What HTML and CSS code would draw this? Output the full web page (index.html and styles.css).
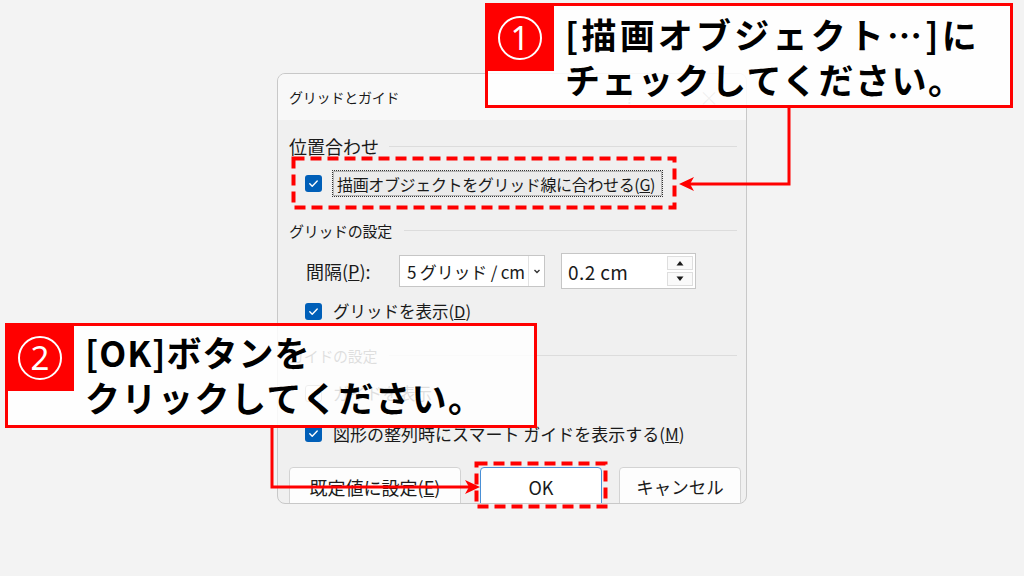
FILE: index.html
```html
<!DOCTYPE html>
<html lang="ja">
<head>
<meta charset="utf-8">
<title>グリッドとガイド</title>
<link rel="stylesheet" href="styles.css">
</head>
<body>
<div class="page">
  <div class="dialog">
    <div class="titlebar">
      <span class="title">グリッドとガイド</span>
      <span class="tbtn help">?</span>
      <span class="tbtn close">×</span>
    </div>
    <div class="body">
      <div class="ghead big">位置合わせ</div>
      <div class="crow first">
        <span class="cb on"><svg viewBox="0 0 16 16"><path d="M4.5 8.3l2.3 2.3 4.7-4.9" /></svg></span>
        <span class="focus">描画オブジェクトをグリッド線に合わせる(<u>G</u>)</span>
      </div>
      <div class="ghead">グリッドの設定</div>
      <div class="srow">
        <span class="slabel">間隔(<u>P</u>):</span>
        <div class="select">
          <span class="sval">5 グリッド / cm</span>
          <span class="chev"><svg viewBox="0 0 10 10"><path d="M2.5 4l2.5 2.5 2.5-2.5" /></svg></span>
        </div>
        <div class="spin">
          <span class="spval">0.2 cm</span>
          <span class="arrows">
            <span class="arr"><svg viewBox="0 0 10 6"><path d="M1.5 5.5h7L5 1z" /></svg></span>
            <span class="arr"><svg viewBox="0 0 10 6"><path d="M1.5 0.5h7L5 5z" /></svg></span>
          </span>
        </div>
      </div>
      <div class="crow r2">
        <span class="cb on"><svg viewBox="0 0 16 16"><path d="M4.5 8.3l2.3 2.3 4.7-4.9" /></svg></span>
        <span class="clabel">グリッドを表示(<u>D</u>)</span>
      </div>
      <div class="ghead">ガイドの設定</div>
      <div class="crow r3">
        <span class="cb off"></span>
        <span class="clabel">ガイドを表示</span>
      </div>
      <div class="crow r4">
        <span class="cb on"><svg viewBox="0 0 16 16"><path d="M4.5 8.3l2.3 2.3 4.7-4.9" /></svg></span>
        <span class="clabel">図形の整列時にスマート ガイドを表示する(<u>M</u>)</span>
      </div>
      <div class="brow">
        <span class="btn wide">既定値に設定(<u>E</u>)</span>
        <span class="btn ok">OK</span>
        <span class="btn cancel">キャンセル</span>
      </div>
    </div>
  </div>

  <svg class="overlay" viewBox="0 0 1024 576" width="1024" height="576">
    <rect x="293.5" y="158.5" width="381" height="49" class="dash" />
    <rect x="476.5" y="463.5" width="129" height="43" class="dash" />
    <polyline points="789,106 789,184 688,184" class="conn" />
    <polygon points="679,184 694,177 690,184 694,191" class="head" />
    <polyline points="272,426 272,487 470,487" class="conn" />
    <polygon points="480,487 465,480 469,487 465,494" class="head" />
  </svg>

  <div class="callout c1">
    <div class="badge"><span class="num">1</span></div>
    <div class="ctext">
      <div class="line l1">[描画オブジェクト…]に</div>
      <div class="line">チェックしてください。</div>
    </div>
  </div>

  <div class="callout c2">
    <div class="badge"><span class="num">2</span></div>
    <div class="ctext">
      <div class="line l3">[OK]ボタンを</div>
      <div class="line">クリックしてください。</div>
    </div>
  </div>
</div>
</body>
</html>
```

FILE: styles.css
```css
* { box-sizing: border-box; }
html, body { margin: 0; padding: 0; }
body {
  background: #f3f3f3;
  font-family: "Noto Sans CJK JP", "Noto Sans", sans-serif;
}
.page {
  position: relative;
  width: 1024px;
  height: 576px;
  overflow: hidden;
  padding: 73px 0 0 277px;
  background: #f3f3f3;
}

/* dialog */
.dialog {
  width: 470px;
  height: 431px;
  border: 1px solid #c8c8c8;
  border-radius: 8px;
  background: #f0f0f0;
  overflow: hidden;
  display: flex;
  flex-direction: column;
  color: #1a1a1a;
}
.titlebar {
  height: 46px;
  flex: none;
  background: #f8f8f8;
  display: flex;
  align-items: center;
  padding-left: 11px;
  font-size: 14px;
}
.title { flex: 1; letter-spacing: -0.2px; }
.tbtn { color: #8a8a8a; font-size: 15px; }
.help { margin-right: 66px; }
.close { font-size: 20px; font-weight: 300; margin-right: 27px; }

.body {
  padding: 0 9px 0 11px;
  display: flex;
  flex-direction: column;
}
.ghead {
  display: flex;
  align-items: center;
  height: 26px;
  margin-top: 20px;
  font-size: 15px;
  letter-spacing: -0.3px;
}
.ghead::after {
  content: "";
  flex: 1;
  height: 1px;
  background: #dcdcdc;
  margin-left: 12px;
}
.ghead.big { font-size: 18px; margin-top: 13px; letter-spacing: 0; }
.ghead.big::after { margin-left: 10px; }

.crow {
  display: flex;
  align-items: center;
  padding-left: 16px;
  height: 22px;
  font-size: 16.5px;
}
.crow.first { height: 27px; margin-top: 11px; }
.crow.r2 { margin-top: 11px; }
.crow.r3 { margin-top: 14px; }
.crow.r4 { margin-top: 18px; font-size: 17px; }
.cb {
  width: 17px;
  height: 17px;
  border-radius: 3px;
  flex: none;
  margin-right: 11px;
  display: flex;
}
.cb.on { background: #005fb8; }
.cb.off { background: #fff; border: 1px solid #8a8a8a; }
.cb svg { width: 17px; height: 17px; }
.cb path { fill: none; stroke: #fff; stroke-width: 1.3; stroke-linecap: round; stroke-linejoin: round; }
.focus {
  margin-left: -1px;
  height: 27px;
  width: 331px;
  display: flex;
  align-items: center;
  padding-left: 4px;
  border: 1px dotted #333;
  box-shadow: inset 0 0 0 1px #b5b5b5;
  background: #ebebeb;
  font-size: 16px;
  letter-spacing: -0.35px;
  white-space: nowrap;
}
.clabel { white-space: nowrap; }

.srow {
  display: flex;
  align-items: center;
  height: 36px;
  margin-top: 10px;
  padding-left: 17px;
}
.slabel { width: 93px; font-size: 18px; }
.select {
  width: 146px;
  height: 32px;
  border: 1px solid #c6c6c6;
  background: #fff;
  display: flex;
  align-items: center;
}
.sval { flex: 1; padding-left: 7px; font-size: 17px; white-space: nowrap; letter-spacing: -0.2px; }
.chev {
  width: 16px;
  height: 30px;
  border-left: 1px solid #e2e2e2;
  display: flex;
  align-items: center;
  justify-content: center;
}
.chev svg { width: 10px; height: 10px; }
.chev path { fill: none; stroke: #333; stroke-width: 1.4; }
.spin {
  margin-left: 16px;
  width: 135px;
  height: 36px;
  border: 1px solid #c6c6c6;
  background: #fff;
  display: flex;
  align-items: center;
  padding: 0 2px 0 6px;
}
.spval { flex: 1; font-size: 19px; letter-spacing: 0.4px; }
.arrows {
  display: flex;
  flex-direction: column;
  gap: 2px;
}
.arr {
  width: 26px;
  height: 14px;
  border: 1px solid #dedede;
  background: #fafafa;
  display: flex;
  align-items: center;
  justify-content: center;
}
.arr svg { width: 10px; height: 6px; }
.arr path { fill: #1a1a1a; }

.brow {
  display: flex;
  margin-top: 23px;
}
.btn {
  height: 40px;
  border: 1px solid #d3d3d3;
  border-radius: 4px;
  background: #fdfdfd;
  display: flex;
  justify-content: center;
  padding-top: 6px;
  font-size: 18px;
  flex: none;
}
.btn.wide { width: 172px; }
.btn.ok { width: 122px; margin-left: 19px; border-color: #4a90d6; background: #fff; }
.btn.cancel { width: 122px; margin-left: 17px; font-size: 17.5px; }

/* annotations */
.overlay {
  position: absolute;
  left: 0;
  top: 0;
}
.dash { fill: none; stroke: #ff0000; stroke-width: 4; stroke-dasharray: 11 6; }
.conn { fill: none; stroke: #ff0000; stroke-width: 3; }
.head { fill: #ff0000; }

.callout {
  position: absolute;
  border: 3px solid #ff0000;
  background: rgba(255, 255, 255, 0.86);
  color: #000;
  font-weight: 700;
  font-size: 35px;
}
.c1 { left: 485px; top: 3px; width: 528px; height: 105px; padding: 5px 0 0 77px; }
.c2 { left: 5px; top: 323px; width: 532px; height: 105px; padding: 3px 0 0 77px; }
.line { height: 45px; line-height: 45px; white-space: nowrap; letter-spacing: 1.5px; }
.l1 { letter-spacing: 3.2px; }
.l3 { letter-spacing: 1px; }
.badge {
  position: absolute;
  left: -2px;
  top: -2px;
  width: 68px;
  height: 67px;
  background: #ff0000;
  display: flex;
  align-items: center;
  justify-content: center;
}
.num {
  width: 44px;
  height: 44px;
  border: 2px solid #fff;
  border-radius: 50%;
  color: #fff;
  font-family: "Noto Sans", sans-serif;
  font-weight: 400;
  font-size: 33px;
  line-height: 39px;
  text-align: center;
}
```
